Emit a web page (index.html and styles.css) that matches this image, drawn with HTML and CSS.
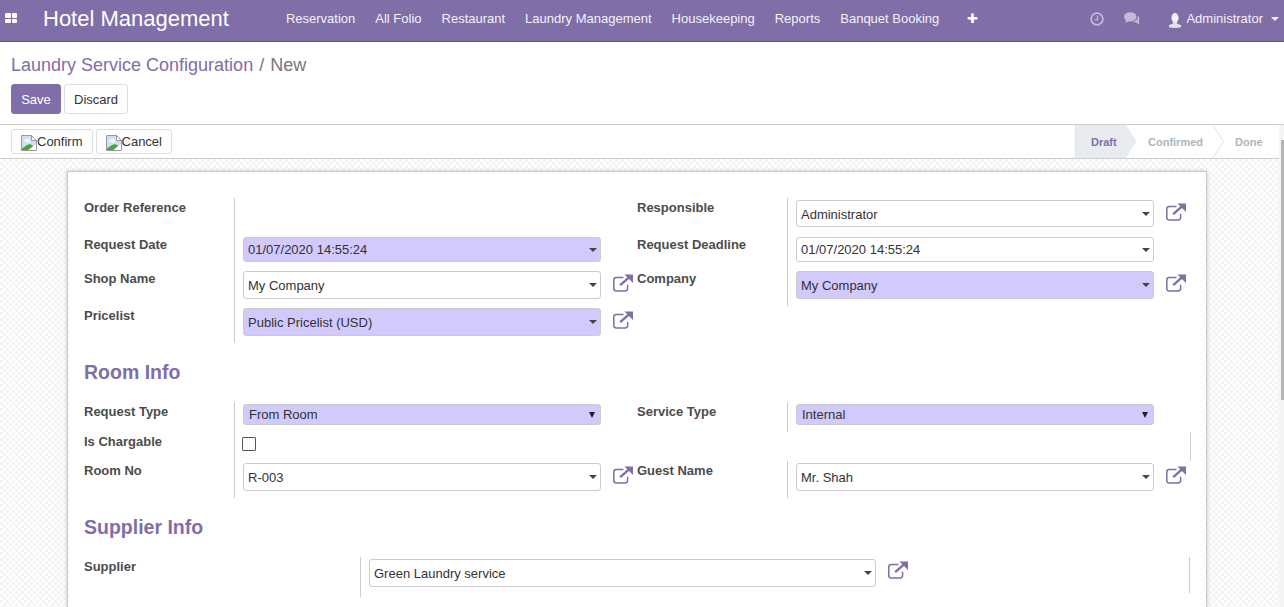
FILE: index.html
```html
<!DOCTYPE html>
<html lang="en">
<head>
    <meta charset="UTF-8">
    <meta name="viewport" content="width=device-width, initial-scale=1.0">
    <title>Laundry Service Configuration - New</title>
    <link rel="stylesheet" href="styles.css">
</head>
<body>

    <!-- shared icons -->
    <svg class="icon-defs" aria-hidden="true">
        <symbol id="ext-link" viewBox="0 0 20 18">
            <path d="M10.5 3.6H3.2A2.4 2.4 0 0 0 .8 6v8.6A2.4 2.4 0 0 0 3.2 17h9a2.4 2.4 0 0 0 2.4-2.4v-3.8" fill="none" stroke="currentColor" stroke-width="1.5"/>
            <path d="M7.2 11.2 16 3.4" fill="none" stroke="currentColor" stroke-width="2.4"/>
            <path d="M11.4.6H20V9Z" fill="currentColor"/>
        </symbol>
        <symbol id="broken-img" viewBox="0 0 16 16">
            <path d="M.5.5h10l5 5v10H.5Z" fill="#cfe0f5" stroke="#9a9a9a"/>
            <path d="M10.500.5v5h5Z" fill="#fff" stroke="#9a9a9a"/>
            <path d="M3 6q1-3 5-2l2 2-3 2Z" fill="#f2f6fc"/>
            <path d="M1 15v-1.500L6 10l3-1 3.500 2-5 4Z" fill="#45a83f"/>
            <path d="M7.500 15l5-4 2.500-2v6Z" fill="#fff"/>
        </symbol>
    </svg>

    <nav class="navbar">
        <span class="apps-icon"><i></i><i></i><i></i><i></i></span>
        <span class="brand">Hotel Management</span>
        <div class="nav-menu">
            <a>Reservation</a>
            <a>All Folio</a>
            <a>Restaurant</a>
            <a>Laundry Management</a>
            <a>Housekeeping</a>
            <a>Reports</a>
            <a>Banquet Booking</a>
            <a class="nav-more">✚</a>
        </div>
        <div class="nav-right">
            <svg class="nav-clock" width="14" height="14" viewBox="0 0 14 14">
                <circle cx="7" cy="7" r="5.900" fill="none" stroke="currentColor" stroke-width="1.700"/>
                <path d="M7.500 3.500V7.800H4.500" fill="none" stroke="currentColor" stroke-width="1.300"/>
            </svg>
            <svg class="nav-chat" width="16" height="13" viewBox="0 0 16 13">
                <ellipse cx="6.300" cy="4.800" rx="6.300" ry="4.600" fill="currentColor"/>
                <path d="M2 7.500 1.500 11 6 8.500Z" fill="currentColor"/>
                <path d="M13.800 3.800C15.500 5 16 7 14.800 8.600L15.600 12.500 11.800 10.300C10 10.500 8.200 10 7.500 9.800 11 10 14.500 7.500 13.800 3.800Z" fill="currentColor"/>
            </svg>
            <svg class="nav-user" width="12" height="15" viewBox="0 0 12 15">
                <ellipse cx="6" cy="4.800" rx="3.600" ry="4.800" fill="#f4f2f8"/>
                <path d="M4.200 8.500h3.600l.4 2.300L12 12v2.200q-6 1.400-12 0V12l3.800-1.200Z" fill="#e4dfee"/>
            </svg>
            <span class="nav-user-name">Administrator</span>
            <span class="nav-caret"></span>
        </div>
    </nav>

    <div class="control-panel">
        <div class="breadcrumb">
            <a>Laundry Service Configuration</a><span class="crumb-sep">/</span><span class="crumb-active">New</span>
        </div>
        <div class="cp-buttons">
            <button class="btn btn-primary">Save</button>
            <button class="btn btn-default">Discard</button>
        </div>
    </div>

    <div class="main">
        <div class="main-col">
            <div class="statusbar">
                <div class="status-actions">
                    <button class="btn-small"><svg class="broken-icon"><use href="#broken-img"/></svg>Confirm</button>
                    <button class="btn-small"><svg class="broken-icon"><use href="#broken-img"/></svg>Cancel</button>
                </div>
                <div class="status-steps">
                    <div class="step step-draft">Draft
                        <svg class="step-arrow" viewBox="0 0 11 33" preserveAspectRatio="none"><path d="M0 0 10.500 16.500 0 33Z" fill="#e9ecef"/></svg>
                    </div>
                    <div class="step step-confirmed">Confirmed
                        <svg class="step-arrow" viewBox="0 0 11 33" preserveAspectRatio="none"><path d="M0 0 10.500 16.500 0 33" fill="#fff" stroke="#dee2e6"/></svg>
                    </div>
                    <div class="step step-done">Done</div>
                </div>
            </div>

            <div class="content">
                <div class="sheet">

                    <div class="two-groups">
                        <div class="group">
                            <div class="row">
                                <label>Order Reference</label>
                                <div class="cell cell-ref"></div>
                            </div>
                            <div class="row">
                                <label>Request Date</label>
                                <div class="cell"><div class="field field-date required">01/07/2020 14:55:24<span class="caret"></span></div></div>
                            </div>
                            <div class="row">
                                <label>Shop Name</label>
                                <div class="cell">
                                    <div class="field">My Company<span class="caret"></span></div>
                                    <svg class="ext-icon"><use href="#ext-link"/></svg>
                                </div>
                            </div>
                            <div class="row">
                                <label>Pricelist</label>
                                <div class="cell">
                                    <div class="field required">Public Pricelist (USD)<span class="caret"></span></div>
                                    <svg class="ext-icon"><use href="#ext-link"/></svg>
                                </div>
                            </div>
                        </div>
                        <div class="group">
                            <div class="row">
                                <label>Responsible</label>
                                <div class="cell">
                                    <div class="field field-user">Administrator<span class="caret"></span></div>
                                    <svg class="ext-icon"><use href="#ext-link"/></svg>
                                </div>
                            </div>
                            <div class="row">
                                <label>Request Deadline</label>
                                <div class="cell"><div class="field field-date">01/07/2020 14:55:24<span class="caret"></span></div></div>
                            </div>
                            <div class="row">
                                <label>Company</label>
                                <div class="cell">
                                    <div class="field required">My Company<span class="caret"></span></div>
                                    <svg class="ext-icon"><use href="#ext-link"/></svg>
                                </div>
                            </div>
                        </div>
                    </div>

                    <h2>Room Info</h2>

                    <div class="two-groups">
                        <div class="group">
                            <div class="row">
                                <label>Request Type</label>
                                <div class="cell"><div class="field field-select required">From Room<span class="caret caret-select"></span></div></div>
                            </div>
                            <div class="row">
                                <label>Is Chargable</label>
                                <div class="cell cell-check"><span class="checkbox"></span></div>
                            </div>
                            <div class="row">
                                <label>Room No</label>
                                <div class="cell">
                                    <div class="field">R-003<span class="caret"></span></div>
                                    <svg class="ext-icon"><use href="#ext-link"/></svg>
                                </div>
                            </div>
                        </div>
                        <div class="group">
                            <div class="row">
                                <label>Service Type</label>
                                <div class="cell"><div class="field field-select required">Internal<span class="caret caret-select"></span></div></div>
                            </div>
                            <div class="row row-blank">
                                <span class="row-rule"></span>
                            </div>
                            <div class="row">
                                <label>Guest Name</label>
                                <div class="cell">
                                    <div class="field">Mr. Shah<span class="caret"></span></div>
                                    <svg class="ext-icon"><use href="#ext-link"/></svg>
                                </div>
                            </div>
                        </div>
                    </div>

                    <h2>Supplier Info</h2>

                    <div class="row row-wide">
                        <label>Supplier</label>
                        <div class="cell">
                            <div class="field">Green Laundry service<span class="caret"></span></div>
                            <svg class="ext-icon"><use href="#ext-link"/></svg>
                            <span class="row-rule"></span>
                        </div>
                    </div>

                </div>
            </div>
        </div>

        <div class="scrollbar"><div class="scrollbar-thumb"></div></div>
    </div>

</body>
</html>
```

FILE: styles.css
```css
html, body {
    height: 100%;
}

body {
    margin: 0;
    font-family: "Liberation Sans", Arial, sans-serif;
    font-size: 13px;
    color: #333;
    background-color: #fff;
    overflow: hidden;
    display: flex;
    flex-direction: column;
}

.icon-defs {
    display: none;
}

/* Top navbar */
.navbar {
    flex: none;
    height: 41px;
    display: flex;
    align-items: center;
    padding-left: 5px;
    background-color: #7f6ea8;
    border-bottom: 1px solid #5e4f85;
    color: #fff;
}

.apps-icon {
    width: 12px;
    height: 10px;
    display: grid;
    grid-template-columns: 1fr 1fr;
    gap: 1px;
    margin-top: -5px;
}

.apps-icon i {
    background-color: #fff;
    border-radius: 1px;
}

.brand {
    font-size: 22px;
    margin-left: 26px;
    margin-top: -3px;
}

.nav-menu {
    display: flex;
    margin-left: 47px;
    margin-top: -4px;
}

.nav-menu a {
    padding: 0 10px;
    color: #f3f1f7;
}

.nav-menu .nav-more {
    padding: 0 17px 0 18px;
    font-size: 13px;
    color: #fff;
}

.nav-right {
    margin-left: auto;
    display: flex;
    align-items: center;
    padding-right: 5px;
    margin-top: -4px;
}

.nav-clock, .nav-chat {
    color: #c3b9d8;
}

.nav-clock {
    margin-right: 20px;
}

.nav-chat {
    margin-right: 29px;
}

.nav-user {
    margin-right: 5px;
    margin-top: 3px;
}

.nav-user-name {
    color: #f3f1f7;
}

.nav-caret {
    width: 0;
    height: 0;
    margin-left: 8px;
    border-left: 4px solid transparent;
    border-right: 4px solid transparent;
    border-top: 4px solid #f3f1f7;
}

/* Control panel */
.control-panel {
    flex: none;
    height: 82px;
    padding: 0 11px;
    border-bottom: 1px solid #ccc;
    box-sizing: content-box;
}

.breadcrumb {
    font-size: 18px;
    line-height: 24px;
    margin-top: 11px;
}

.breadcrumb a {
    color: #7f6ea8;
}

.crumb-sep {
    color: #777;
    padding: 0 6px;
}

.crumb-active {
    color: #777;
}

.cp-buttons {
    display: flex;
    gap: 3px;
    margin-top: 7px;
}

.btn {
    height: 30px;
    padding: 0 9px;
    font-family: inherit;
    font-size: 13px;
    border-radius: 3px;
    border: 1px solid #ddd;
}

.btn-primary {
    width: 50px;
    background-color: #7f6ea8;
    border-color: #7f6ea8;
    color: #fff;
}

.btn-default {
    width: 64px;
    background-color: #fff;
    color: #333;
}

/* Everything under the control panel */
.main {
    flex: 1;
    min-height: 0;
    display: flex;
}

.main-col {
    flex: 1;
    min-width: 0;
    display: flex;
    flex-direction: column;
}

.scrollbar {
    flex: none;
    width: 5px;
    background-color: #f5f5f5;
}

.scrollbar-thumb {
    width: 3px;
    height: 260px;
    margin: 15px 0 0 2px;
    background-color: #b5b5b5;
}

/* Status bar */
.statusbar {
    flex: none;
    height: 33px;
    display: flex;
    justify-content: space-between;
    border-bottom: 1px solid #ccc;
}

.status-actions {
    display: flex;
    gap: 3px;
    padding: 4px 0 0 11px;
}

.btn-small {
    height: 25px;
    padding: 0 9px;
    display: flex;
    align-items: center;
    font-family: inherit;
    font-size: 13px;
    color: #333;
    background-color: #fff;
    border: 1px solid #ddd;
    border-radius: 3px;
}

.broken-icon {
    width: 16px;
    height: 16px;
    margin-top: 3px;
}

.status-steps {
    display: flex;
}

.step {
    position: relative;
    line-height: 34px;
    font-size: 11px;
    font-weight: bold;
    color: #adb5bd;
}

.step-arrow {
    position: absolute;
    top: 0;
    left: 100%;
    width: 11px;
    height: 33px;
    z-index: 1;
}

.step-draft {
    width: 35px;
    padding: 0 0 0 15px;
    color: #7f6ea8;
    background-color: #e9ecef;
    border-left: 1px solid #dee2e6;
}

.step-confirmed {
    width: 65px;
    padding-left: 22px;
}

.step-done {
    width: 44px;
    padding-left: 22px;
}

/* Form sheet */
.content {
    flex: 1;
    min-height: 0;
    overflow: hidden;
    padding-top: 12px;
    background: repeating-conic-gradient(#f3f3f3 0 25%, #fff 0 50%) 0 0 / 6px 6px;
}

.sheet {
    width: 1140px;
    margin-left: 67px;
    padding: 26px 15px 40px 16px;
    box-sizing: border-box;
    background-color: #fff;
    border: 1px solid #c8c8c8;
    box-shadow: 0 0 4px rgba(0, 0, 0, 0.2);
}

.two-groups {
    display: grid;
    grid-template-columns: 553px 554px;
}

.row {
    display: grid;
    grid-template-columns: 150px 1fr;
}

.row label {
    padding-top: 1px;
    font-weight: bold;
    line-height: 18px;
    color: #4c4c4c;
}

.cell {
    display: flex;
    align-items: flex-start;
    gap: 12px;
    padding: 2px 0 7px 8px;
    border-left: 1px solid #ccc;
}

.cell-ref {
    height: 28px;
}

.cell-check {
    height: 15px;
    padding: 5px 0 9px 7px;
}

.field {
    position: relative;
    flex: none;
    width: 358px;
    height: 28px;
    line-height: 28px;
    padding-left: 4px;
    box-sizing: border-box;
    background-color: #fff;
    border: 1px solid #ccc;
    border-radius: 3px;
    color: #333;
}

.required {
    background-color: #d2c9fc;
}

.field-user {
    height: 27px;
    line-height: 27px;
    margin-bottom: 1px;
}

.field-date {
    height: 25px;
    line-height: 23px;
}

.field-select {
    height: 21px;
    line-height: 19px;
    padding-left: 5px;
}

.caret {
    position: absolute;
    top: 50%;
    right: 3px;
    width: 0;
    height: 0;
    margin-top: -2px;
    border-left: 4px solid transparent;
    border-right: 4px solid transparent;
    border-top: 4px solid #444;
}

.caret-select {
    right: 5px;
    margin-top: -3px;
    border-left-width: 3.5px;
    border-right-width: 3.5px;
    border-top: 6px solid #222;
}

.ext-icon {
    flex: none;
    width: 20px;
    height: 18px;
    margin-top: 3px;
    color: #7f6ea8;
}

.checkbox {
    width: 12px;
    height: 12px;
    background-color: #fff;
    border: 1px solid #555;
    border-radius: 1px;
}

.row-blank {
    height: 29px;
    display: flex;
    justify-content: flex-end;
}

.row-rule {
    flex: none;
    width: 1px;
    height: 29px;
    background-color: #ccc;
}

h2 {
    margin: 16px 0 17px;
    font-size: 19.5px;
    line-height: 26px;
    font-weight: bold;
    color: #7f6ea8;
}

.row-wide {
    grid-template-columns: 276px 1fr;
}

.row-wide .field {
    width: 507px;
}

.row-wide .cell {
    height: 31px;
}

.row-wide .ext-icon {
    margin-top: 2px;
}

.row-wide .row-rule {
    height: 36px;
    margin: -2px 1px 0 auto;
}
```
